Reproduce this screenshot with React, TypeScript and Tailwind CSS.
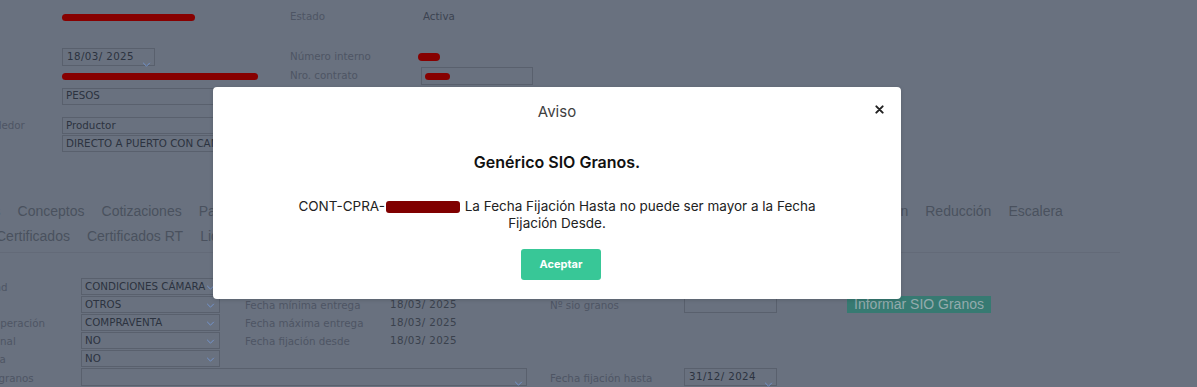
import React from "react";

/* ── Small pieces ── */
const Chevron: React.FC<{ className?: string }> = ({ className = "" }) => (
  <svg viewBox="0 0 10 6" className={`h-[5px] w-[9px] ${className}`} fill="none">
    <path d="M1 1l4 4 4-4" stroke="#7394cc" strokeWidth="1.2" />
  </svg>
);

const Box: React.FC<{ w: string; h?: string; children?: React.ReactNode; chevron?: boolean }> = ({
  w,
  h = "h-[17px]",
  children,
  chevron,
}) => (
  <div className={`relative flex items-center overflow-hidden border border-[#59606d] ${w} ${h}`}>
    <span className="whitespace-nowrap pl-[3px] text-[#2c3340]">{children}</span>
    {chevron && <Chevron className="absolute right-[4px] top-[6px]" />}
  </div>
);

const DateBox: React.FC<{ value: string }> = ({ value }) => (
  <div className="relative flex h-[18px] w-[93px] items-center border border-[#59606d]">
    <span className="pl-[4px] tracking-[0.4px] text-[#2c3340]">{value}</span>
    <Chevron className="absolute right-[3px] top-[13px]" />
  </div>
);

const Redact: React.FC<{ className: string }> = ({ className }) => (
  <span className={`block rounded-full bg-[#870000] ${className}`} />
);

const tabsTop = [
  "Datos",
  "Conceptos",
  "Cotizaciones",
  "Pagos",
  "Descuentos",
  "Entregas",
  "Fijaciones",
  "Facturación",
  "Comisiones",
  "Calidad",
  "Documentos",
  "Ampliación",
  "Reducción",
  "Escalera",
];
const tabsBottom = ["Certificados", "Certificados RT", "Liquidaciones", "Contratos asociados"];

export default function App() {
  const lbl = "text-[#4e5564]";

  return (
    <div className="relative h-[387px] w-full overflow-hidden bg-[#69717f] font-['DejaVu_Sans',sans-serif] text-[10.3px]">
      {/* ── Header fields ── */}
      <div className="ml-[-49px] flex flex-col pt-[8px]">
        <div className="flex h-[18px] items-center">
          <div className={`w-[111px] shrink-0 ${lbl}`}>Cliente</div>
          <div className="w-[228px] shrink-0">
            <Redact className="h-[7px] w-[133px]" />
          </div>
          <div className={`w-[133px] shrink-0 ${lbl}`}>Estado</div>
          <div className="text-[#3c4351]">Activa</div>
        </div>

        <div className="mt-[22px] flex h-[18px] items-center">
          <div className={`w-[111px] shrink-0 ${lbl}`}>Fecha</div>
          <div className="w-[228px] shrink-0">
            <DateBox value="18/03/ 2025" />
          </div>
          <div className={`w-[128px] shrink-0 ${lbl}`}>Número interno</div>
          <Redact className="h-[8px] w-[22px]" />
        </div>

        <div className="mt-[1px] flex h-[18px] items-center">
          <div className={`w-[111px] shrink-0 ${lbl}`}>Tipo</div>
          <div className="w-[228px] shrink-0">
            <Redact className="h-[7px] w-[196px]" />
          </div>
          <div className={`w-[131px] shrink-0 ${lbl}`}>Nro. contrato</div>
          <div className="flex h-[18px] w-[112px] items-center border border-[#59606d] pl-[3px]">
            <Redact className="h-[7px] w-[25px]" />
          </div>
        </div>

        <div className="mt-[2px] flex h-[18px] items-center">
          <div className={`w-[111px] shrink-0 ${lbl}`}>Moneda</div>
          <Box w="w-[196px]">PESOS</Box>
        </div>

        <div className="mt-[12px] flex h-[17px] items-center">
          <div className={`w-[111px] shrink-0 ${lbl}`}>Tipo vendedor</div>
          <Box w="w-[196px]">Productor</Box>
        </div>
        <div className="mt-[1px] flex h-[17px] items-center">
          <div className="w-[111px] shrink-0" />
          <Box w="w-[196px]">DIRECTO A PUERTO CON CAMIÓN</Box>
        </div>
      </div>

      {/* ── Tabs ── */}
      <div className="mt-[51px] font-['Liberation_Sans',Arial,sans-serif] text-[14px] leading-[16px] text-[#4a515e]">
        <ul className="ml-[-36px] flex gap-[17px] whitespace-nowrap">
          {tabsTop.map((t) => (
            <li key={t}>{t}</li>
          ))}
        </ul>
        <ul className="ml-[-4px] mt-[9px] flex gap-[17px] whitespace-nowrap">
          {tabsBottom.map((t) => (
            <li key={t}>{t}</li>
          ))}
        </ul>
      </div>
      <div className="mt-[8px] h-px w-[1120px] bg-[#636a78]" />

      {/* ── Contract detail ── */}
      <div className="ml-[-31px] mt-[25px] flex flex-col">
        <div className="flex h-[18px] items-start">
          <div className={`w-[112px] shrink-0 pt-[2px] ${lbl}`}>Calidad</div>
          <div className="w-[164px] shrink-0">
            <Box w="w-[139px]" chevron>
              CONDICIONES CÁMARA
            </Box>
          </div>
        </div>

        {[
          { l: "Tipo", v: "OTROS", m: "Fecha mínima entrega", d: "18/03/ 2025", extra: true },
          { l: "Tipo operación", v: "COMPRAVENTA", m: "Fecha máxima entrega", d: "18/03/ 2025" },
          { l: "Adicional", v: "NO", m: "Fecha fijación desde", d: "18/03/ 2025" },
          { l: "Cuenta", v: "NO" },
        ].map((r) => (
          <div key={r.l} className="flex h-[18px] items-start">
            <div className={`w-[112px] shrink-0 pt-[2px] ${lbl}`}>{r.l}</div>
            <div className="w-[164px] shrink-0">
              <Box w="w-[139px]" chevron>
                {r.v}
              </Box>
            </div>
            <div className={`w-[145px] shrink-0 pt-[2px] ${lbl}`}>{r.m}</div>
            <div className="w-[160px] shrink-0 pt-[1px] tracking-[0.4px] text-[#3a414d]">{r.d}</div>
            {r.extra && (
              <>
                <div className={`w-[134px] shrink-0 pt-[2px] ${lbl}`}>Nº sio granos</div>
                <div className="w-[163px] shrink-0">
                  <div className="h-[17px] w-[93px] border border-[#59606d]" />
                </div>
                <button className="flex h-[17px] w-[144px] items-center justify-center bg-[#377a72] font-['Liberation_Sans',Arial,sans-serif] text-[14px] text-[#93abad]">
                  Informar SIO Granos
                </button>
              </>
            )}
          </div>
        ))}

        <div className="flex h-[18px] items-start">
          <div className={`w-[112px] shrink-0 pt-[3px] ${lbl}`}>Zona granos</div>
          <div className="relative mr-[23px] h-[18px] w-[446px] shrink-0 border border-[#59606d]">
            <Chevron className="absolute right-[3px] top-[12px]" />
          </div>
          <div className={`w-[134px] shrink-0 pt-[3px] ${lbl}`}>Fecha fijación hasta</div>
          <DateBox value="31/12/ 2024" />
        </div>
      </div>

      {/* ── Aviso modal ── */}
      <div className="absolute left-[213px] top-[87px] flex h-[212px] w-[688px] flex-col items-center rounded-[4px] bg-white pt-[16px] font-['Inter',sans-serif] shadow-[0_1px_4px_rgba(0,0,0,0.15)]">
        <button className="absolute right-[16px] top-[17px] p-[1px]">
          <svg viewBox="0 0 10 10" className="h-[9px] w-[9px]">
            <path d="M1.5 1.5l7 7M8.5 1.5l-7 7" stroke="#222" strokeWidth="2.2" strokeLinecap="round" />
          </svg>
        </button>
        <h2 className="text-[15px] leading-[18px] text-[#3f3f3f]">Aviso</h2>
        <h3 className="mt-[31px] text-[16px] font-semibold leading-[20px] text-[#111]">Genérico SIO Granos.</h3>
        <p className="mt-[26px] text-center text-[13.5px] leading-[17px] text-[#222]">
          CONT-CPRA-
          <span className="mx-[1px] inline-block h-[12px] w-[74px] translate-y-[2px] rounded-[3px] bg-[#800000]" /> La
          Fecha Fijación Hasta no puede ser mayor a la Fecha
          <br />
          Fijación Desde.
        </p>
        <button className="ml-[8px] mt-[17px] h-[31px] w-[80px] rounded-[3px] bg-[#38c797] text-[11px] font-bold text-white">
          Aceptar
        </button>
      </div>
    </div>
  );
}
